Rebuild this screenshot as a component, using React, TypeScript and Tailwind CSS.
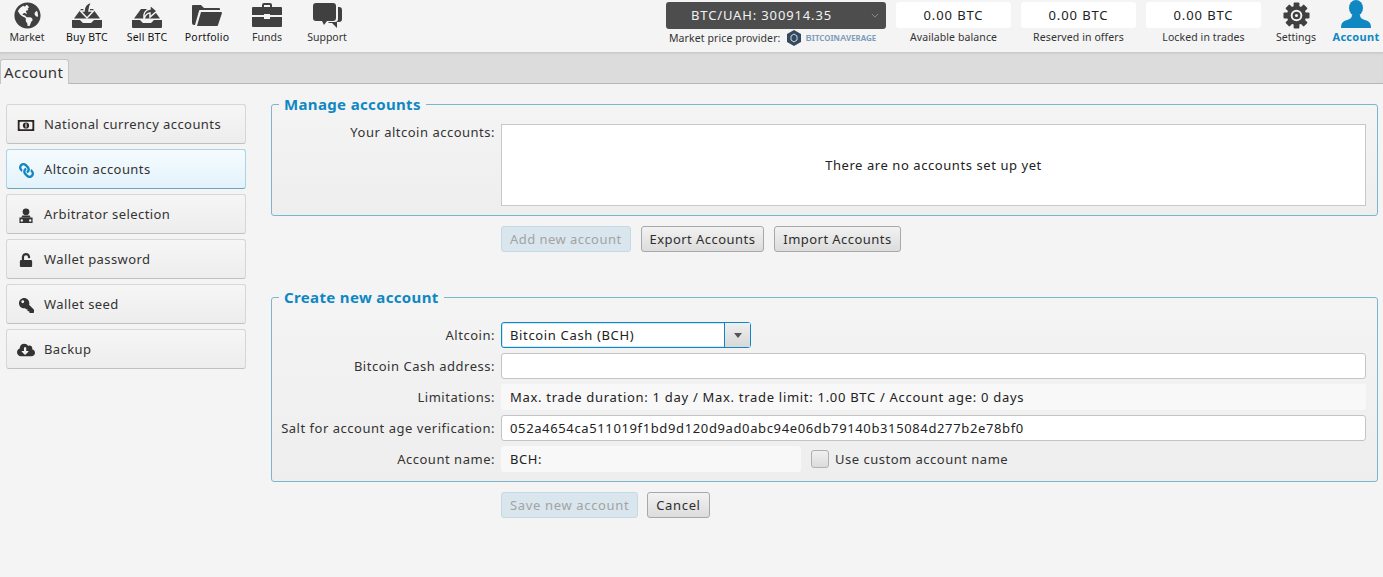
import type { ReactNode } from "react";
import { FaCloudDownloadAlt, FaGlobeAmericas, FaKey, FaLink, FaUnlock } from "react-icons/fa";

const font = "font-['Noto_Sans',sans-serif]";

function TrayIcon({ up }: { up?: boolean }) {
  return (
    <svg viewBox="0 0 32 26" className="h-[26px] w-[32px]" fill="#404040">
      <path d="M1 18h8l3 3h8l3-3h8v7a1 1 0 0 1-1 1H2a1 1 0 0 1-1-1z" />
      <path d="M3 16.5L10 7h12l7 9.5z" />
      {up ? (
        <path d="M13 17c-1-5 1-9 6-10V3l7 6-7 6v-4c-3 0-5 3-6 6z" stroke="#f4f4f4" strokeWidth="1.5" />
      ) : (
        <path d="M21 0c-5 1-8 4-8 9H9.5l6.5 7 6.5-7H18c0-3 1-6 3-9z" stroke="#f4f4f4" strokeWidth="1.5" />
      )}
    </svg>
  );
}

function FolderIcon() {
  return (
    <svg viewBox="0 0 30 22" className="h-[22px] w-[30px]" fill="#404040">
      <path d="M0 2a1 1 0 0 1 1-1h8l3 3h15a1 1 0 0 1 1 1v1H8a1 1 0 0 0-1 1L3 21H2a2 2 0 0 1-2-2z" />
      <path d="M9 8h20a1 1 0 0 1 1 1l-4 12a1 1 0 0 1-1 1H5z" />
    </svg>
  );
}

function CaseIcon() {
  return (
    <svg viewBox="0 0 30 24" className="h-[24px] w-[30px]" fill="#404040">
      <path d="M10 4V2a2 2 0 0 1 2-2h6a2 2 0 0 1 2 2v2h-2V2h-6v2z" />
      <path d="M1 4h28a1 1 0 0 1 1 1v7H18v-1h-6v1H0V5a1 1 0 0 1 1-1z" />
      <path d="M0 14h12v2h6v-2h12v9a1 1 0 0 1-1 1H1a1 1 0 0 1-1-1z" />
    </svg>
  );
}

function ChatIcon() {
  return (
    <svg viewBox="0 0 29 25" className="h-[25px] w-[29px]" fill="#404040">
      <path d="M3 0h17a3 3 0 0 1 3 3v12a3 3 0 0 1-3 3h-6l-3 4-2-4H3a3 3 0 0 1-3-3V3a3 3 0 0 1 3-3z" />
      <path d="M25 4h1a3 3 0 0 1 3 3v9a3 3 0 0 1-3 3h-2v6l-5-5h-4l1-1h6a3 3 0 0 0 3-3z" />
    </svg>
  );
}

function GearIcon() {
  return (
    <svg viewBox="0 0 28 28" className="h-[27px] w-[27px]">
      {[0, 45, 90, 135].map((a) => (
        <rect key={a} x="11" y="0.5" width="6" height="27" rx="1" fill="#404040" transform={`rotate(${a} 14 14)`} />
      ))}
      <circle cx="14" cy="14" r="10" fill="#404040" />
      <circle cx="14" cy="14" r="6" fill="#f4f4f4" />
      <circle cx="14" cy="14" r="4" fill="#404040" />
      <circle cx="14" cy="14" r="1.6" fill="#f4f4f4" />
    </svg>
  );
}

function UserIcon() {
  return (
    <svg viewBox="0 0 30 28" className="h-[28px] w-[30px]" fill="#0f87c3">
      <ellipse cx="15" cy="8" rx="7" ry="8" />
      <path d="M0 28c0-5 2-7 6-8 3-1 5-2 5-5h8c0 3 2 4 5 5 4 1 6 3 6 8z" />
    </svg>
  );
}

function BillIcon() {
  return (
    <svg viewBox="0 0 18 12" className="h-[11px] w-[18px]">
      <rect width="18" height="12" fill="#2e2424" />
      <rect x="2" y="2" width="14" height="8" rx="1" fill="#f0f0f0" />
      <circle cx="9" cy="6" r="3.4" fill="#2e2424" />
      <rect x="8.4" y="3.8" width="1.2" height="4.4" fill="#f0f0f0" />
    </svg>
  );
}

function ArbitratorIcon() {
  return (
    <svg viewBox="0 0 14 16" className="h-[15px] w-[14px]" fill="#333">
      <circle cx="7" cy="4" r="3.6" />
      <path d="M3 8h8l1 2H2z" />
      <path d="M0 10h14v6H0zm2.5 2a1.3 1.3 0 1 0 0 2.6 1.3 1.3 0 0 0 0-2.6zm9 0a1.3 1.3 0 1 0 0 2.6 1.3 1.3 0 0 0 0-2.6z" fillRule="evenodd" />
    </svg>
  );
}

const nav: { label: string; icon: ReactNode; dark?: boolean }[] = [
  { label: "Market", icon: <FaGlobeAmericas size={27} className="text-[#404040]" /> },
  { label: "Buy BTC", icon: <TrayIcon />, dark: true },
  { label: "Sell BTC", icon: <TrayIcon up />, dark: true },
  { label: "Portfolio", icon: <FolderIcon />, dark: true },
  { label: "Funds", icon: <CaseIcon /> },
  { label: "Support", icon: <ChatIcon /> },
];

const side: { label: string; icon: ReactNode; active?: boolean }[] = [
  { label: "National currency accounts", icon: <BillIcon /> },
  { label: "Altcoin accounts", icon: <FaLink size={15} className="-scale-x-100 text-[#0f87c3]" />, active: true },
  { label: "Arbitrator selection", icon: <ArbitratorIcon /> },
  { label: "Wallet password", icon: <FaUnlock size={14} className="text-[#333]" /> },
  { label: "Wallet seed", icon: <FaKey size={15} className="-scale-x-100 text-[#333]" /> },
  { label: "Backup", icon: <FaCloudDownloadAlt size={18} className="text-[#333]" /> },
];

function Balance({ label }: { label: string }) {
  return (
    <div className="flex w-[115px] flex-col items-center">
      <div className="flex h-[26px] w-full items-center justify-center rounded-[3px] bg-white pt-[2px] text-[13px] tracking-[0.9px] text-[#222]">
        0.00 BTC
      </div>
      <div className="mt-[2px] text-[10.5px] leading-[14px] tracking-[0.1px] text-[#333]">{label}</div>
    </div>
  );
}

function Btn({ children, disabled, wide }: { children: ReactNode; disabled?: boolean; wide?: boolean }) {
  const track = wide ? "tracking-[0.65px]" : "tracking-[0.45px]";
  return (
    <div
      className={
        disabled
          ? `flex h-[26px] items-center rounded-[3px] border border-[#c4d9e4] bg-[#d9e6ee] px-[8px] pt-[2px] text-[13px] whitespace-nowrap text-[#a3a3a3] ${track}`
          : `flex h-[26px] items-center rounded-[3px] border border-[#a8a8a8] bg-gradient-to-b from-[#f2f2f2] to-[#dcdcdc] px-[8px] pt-[2px] text-[13px] whitespace-nowrap text-[#2e2e2e] ${track}`
      }
    >
      {children}
    </div>
  );
}

function Row({ label, children }: { label: string; children: ReactNode }) {
  return (
    <div className="flex h-[26px] items-center">
      <div className="w-[224px] shrink-0 pt-[2px] pr-[6px] text-right text-[13px] tracking-[0.52px] whitespace-nowrap text-[#333]">
        {label}
      </div>
      {children}
    </div>
  );
}

function Group({ title, className, children }: { title: string; className: string; children: ReactNode }) {
  return (
    <fieldset className={`rounded-[3px] border border-[#7cb6ca] bg-gradient-to-b from-[#f4f4f4] to-[#eeeeee] px-[5px] ${className}`}>
      <legend className="ml-[2px] px-[5px] text-[15px] leading-[18px] font-bold tracking-[0.35px] text-[#0f87c3]">
        {title}
      </legend>
      {children}
    </fieldset>
  );
}

export default function App() {
  return (
    <div className={`h-[577px] w-[1383px] overflow-hidden bg-[#f4f4f4] ${font}`}>
      <header className="flex h-[52px] items-start justify-between bg-[#f4f4f4]">
        <nav className="ml-[-3px] flex">
          {nav.map((n) => (
            <div key={n.label} className="flex w-[60px] flex-col items-center">
              <div className="flex h-[30px] items-center justify-center">{n.icon}</div>
              <div className={`text-[10.5px] leading-[14px] ${n.dark ? "tracking-[0.2px] text-[#111]" : "text-[#333]"}`}>{n.label}</div>
            </div>
          ))}
        </nav>
        <div className="mr-[-3px] flex items-start pt-[2px]">
          <div className="flex w-[220px] flex-col">
            <div className="relative flex h-[27px] items-center justify-center rounded-[3px] bg-[#4d4d4d] pr-[29px] text-[13px] tracking-[0.85px] text-[#f2f2f2]">
              BTC/UAH: 300914.35
              <svg viewBox="0 0 10 6" className="absolute right-[7px] top-[11px] h-[5px] w-[8px]" fill="none" stroke="#999">
                <path d="M1 1l4 4 4-4" />
              </svg>
            </div>
            <div className="mt-[1px] flex items-center pl-[3px] text-[10.5px] leading-[14px] tracking-[0.1px] text-[#333]">
              Market price provider:
              <svg viewBox="0 0 14 16" className="ml-[6px] h-[16px] w-[14px]">
                <path d="M7 0l7 4v8l-7 4-7-4V4z" fill="#34495e" />
                <path d="M7 4l3 2v4l-3 2-3-2V6z" fill="none" stroke="#cfd8e3" />
              </svg>
              <span className="ml-[5px] text-[9.5px] font-semibold tracking-[0px] text-[#7f9cbc] [font-variant:small-caps]">BitcoinAverage</span>
            </div>
          </div>
          <div className="ml-[10px] flex gap-[10px]">
            <Balance label="Available balance" />
            <Balance label="Reserved in offers" />
            <Balance label="Locked in trades" />
          </div>
          <div className="ml-[5px] mt-[-2px] flex">
            <div className="flex w-[60px] flex-col items-center">
              <div className="flex h-[30px] items-center justify-center"><GearIcon /></div>
              <div className="text-[10.5px] leading-[14px] text-[#333]">Settings</div>
            </div>
            <div className="flex w-[60px] flex-col items-center">
              <div className="flex h-[30px] items-start justify-center"><UserIcon /></div>
              <div className="text-[11px] leading-[14px] font-bold tracking-[0.3px] text-[#0f87c3]">Account</div>
            </div>
          </div>
        </div>
      </header>

      <div className="flex h-[32px] items-end border-b border-[#b5b5b5] bg-[#dcdcdc] shadow-[inset_0_3px_3px_-2px_rgba(0,0,0,0.12)]">
        <div className="mb-[-1px] flex h-[25px] w-[69px] items-center justify-start rounded-t-[3px] border border-b-0 border-[#c4c4c4] bg-[#f4f4f4] pl-[3px] text-[15px] tracking-[0.3px] text-[#333]">
          Account
        </div>
      </div>

      <div className="flex pt-[20px]">
        <aside className="ml-[6px] flex w-[240px] shrink-0 flex-col gap-[5px]">
          {side.map((s) => (
            <div
              key={s.label}
              className={
                s.active
                  ? "flex h-[40px] items-center rounded-[3px] border border-[#a9d4e6] border-b-[#6fa5b8] bg-gradient-to-b from-[#f5fbfe] to-[#e3f3fb] pt-[2px] text-[13px] tracking-[0.42px] text-[#333]"
                  : "flex h-[40px] items-center rounded-[3px] border border-[#d6d6d6] border-b-[#c0c0c0] bg-gradient-to-b from-[#f6f6f6] to-[#ededed] pt-[2px] text-[13px] tracking-[0.42px] text-[#333]"
              }
            >
              <div className="flex w-[37px] shrink-0 justify-center pl-[1px]">{s.icon}</div>
              {s.label}
            </div>
          ))}
        </aside>

        <main className="ml-[25px] w-[1107px] shrink-0">
          <Group title="Manage accounts" className="mt-[-9px] h-[121px]">
            <div className="flex pt-[11px]">
              <div className="w-[224px] shrink-0 pr-[6px] text-right text-[13px] leading-[16px] tracking-[0.5px] text-[#333]">
                Your altcoin accounts:
              </div>
              <div className="flex h-[82px] w-[865px] items-center justify-center border border-[#c8c8c8] bg-white pt-[2px] text-[13px] tracking-[0.57px] text-[#222]">
                There are no accounts set up yet
              </div>
            </div>
          </Group>
          <div className="mt-[10px] flex gap-[10px] pl-[230px]">
            <Btn disabled>Add new account</Btn>
            <Btn>Export Accounts</Btn>
            <Btn>Import Accounts</Btn>
          </div>

          <Group title="Create new account" className="mt-[36px] h-[194px]">
            <div className="flex flex-col gap-[5px] pt-[16px]">
              <Row label="Altcoin:">
                <div className="flex h-[26px] w-[250px] rounded-[3px] border border-[#0f87c3] bg-white shadow-[inset_0_0_0_1px_#cfe9f6]">
                  <div className="flex flex-1 items-center pt-[2px] pl-[8px] text-[13px] tracking-[0.65px] text-[#222]">
                    Bitcoin Cash (BCH)
                  </div>
                  <div className="flex w-[26px] items-center justify-center border-l border-[#0f87c3] bg-gradient-to-b from-[#efefef] to-[#d8d8d8]">
                    <div className="h-0 w-0 border-x-[4px] border-t-[5px] border-x-transparent border-t-[#555]" />
                  </div>
                </div>
              </Row>
              <Row label="Bitcoin Cash address:">
                <div className="h-[26px] w-[865px] rounded-[3px] border border-[#c4c4c4] bg-white" />
              </Row>
              <Row label="Limitations:">
                <div className="flex h-[26px] w-[865px] items-center rounded-[3px] bg-[#f8f8f8] pt-[2px] pl-[9px] text-[13px] tracking-[0.7px] text-[#222]">
                  Max. trade duration: 1 day / Max. trade limit: 1.00 BTC / Account age: 0 days
                </div>
              </Row>
              <Row label="Salt for account age verification:">
                <div className="flex h-[26px] w-[865px] items-center rounded-[3px] border border-[#c4c4c4] bg-white pt-[2px] pl-[8px] text-[13px] tracking-[0.63px] text-[#222]">
                  052a4654ca511019f1bd9d120d9ad0abc94e06db79140b315084d277b2e78bf0
                </div>
              </Row>
              <Row label="Account name:">
                <div className="flex h-[26px] w-[300px] items-center rounded-[3px] bg-[#f8f8f8] pt-[2px] pl-[9px] text-[13px] tracking-[0.6px] text-[#222]">
                  BCH:
                </div>
                <div className="ml-[10px] h-[18px] w-[18px] rounded-[3px] border border-[#b0b0b0] bg-gradient-to-b from-[#f0f0f0] to-[#dcdcdc]" />
                <div className="ml-[6px] pt-[2px] text-[13px] tracking-[0.5px] text-[#333]">Use custom account name</div>
              </Row>
            </div>
          </Group>
          <div className="mt-[10px] flex gap-[9px] pl-[230px]">
            <Btn disabled wide>Save new account</Btn>
            <Btn wide>Cancel</Btn>
          </div>
        </main>
      </div>
    </div>
  );
}
